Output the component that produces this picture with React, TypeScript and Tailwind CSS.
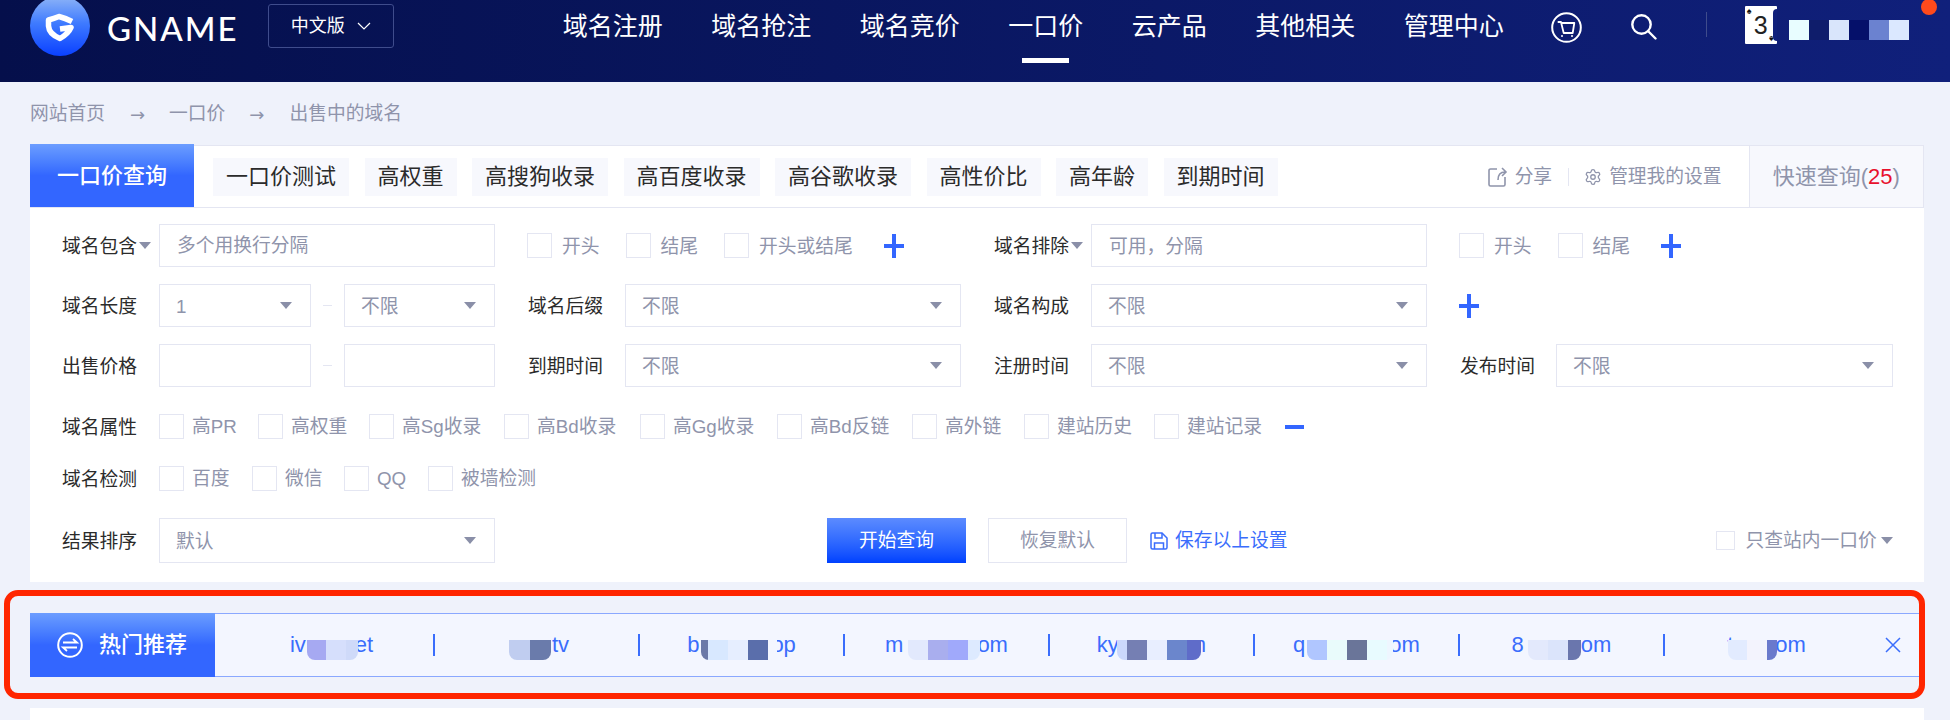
import React from 'react';
import { Settings } from 'lucide-react';

const navItems = ['域名注册', '域名抢注', '域名竞价', '一口价', '云产品', '其他相关', '管理中心'];
const quickTags = ['一口价测试', '高权重', '高搜狗收录', '高百度收录', '高谷歌收录', '高性价比', '高年龄', '到期时间'];

const attrItems = [
  { text: '高PR', w: 'w-[99px]' },
  { text: '高权重', w: 'w-[111px]' },
  { text: '高Sg收录', w: 'w-[135px]' },
  { text: '高Bd收录', w: 'w-[136px]' },
  { text: '高Gg收录', w: 'w-[137px]' },
  { text: '高Bd反链', w: 'w-[135px]' },
  { text: '高外链', w: 'w-[112px]' },
  { text: '建站历史', w: 'w-[130px]' },
  { text: '建站记录', w: 'w-[131px]' },
];

const checkItems = [
  { text: '百度', w: 'w-[93px]' },
  { text: '微信', w: 'w-[92px]' },
  { text: 'QQ', w: 'w-[84px]' },
  { text: '被墙检测', w: 'w-[120px]' },
];

// the domain names are blurred out in the picture, so each one is text + mosaic + text
const hotDomains = [
  { pre: 'iv', post: 'et', patch: 'ml-[1px] -mr-[3px]', cells: [['bg-[#a6a9f2]', 'w-[19px]'], ['bg-[#d6dffc]', 'w-[20px]'], ['bg-[#cfdaf9]', 'w-[12px]']] },
  { pre: '', post: 'tv', patch: 'ml-[5px] mr-[1px]', cells: [['bg-[#c0cdf0]', 'w-[21px]'], ['bg-[#6a7bab]', 'w-[21px]']] },
  { pre: 'b', post: 'op', patch: 'ml-[2px] -mr-[6px]', cells: [['bg-[#6b79a8]', 'w-[7px]'], ['bg-[#d8e8ff]', 'w-[20px]'], ['bg-[#e6eeff]', 'w-[20px]'], ['bg-[#5a6eab]', 'w-[20px]'], ['bg-[#f3f6ff]', 'w-[9px]']] },
  { pre: 'm', post: 'om', patch: 'ml-[5px] -mr-[3px]', cells: [['bg-[#e2e9fd]', 'w-[20px]'], ['bg-[#a9aeee]', 'w-[20px]'], ['bg-[#a0a9fb]', 'w-[20px]'], ['bg-[#ddeaff]', 'w-[12px]']] },
  { pre: 'ky', post: 'm', patch: '-ml-[2px] -mr-[13px]', cells: [['bg-[#cbd8fc]', 'w-[10px]'], ['bg-[#757fb3]', 'w-[20px]'], ['bg-[#e8eeff]', 'w-[20px]'], ['bg-[#6b86cc]', 'w-[20px]'], ['bg-[#5f6cc9]', 'w-[14px]']] },
  { pre: 'q', post: 'om', patch: 'ml-[2px] -mr-[4px]', cells: [['bg-[#b0c6ff]', 'w-[20px]'], ['bg-[#e9fbfb]', 'w-[20px]'], ['bg-[#6a7599]', 'w-[20px]'], ['bg-[#e8fbff]', 'w-[20px]'], ['bg-[#eef6ff]', 'w-[6px]']] },
  { pre: '8', post: 'om', patch: 'ml-[4px]', cells: [['bg-[#e3e9fc]', 'w-[20px]'], ['bg-[#dbe4fb]', 'w-[20px]'], ['bg-[#6a76ad]', 'w-[13px]']] },
  { pre: 't', post: 'om', patch: '-ml-[5px] -mr-[2px]', cells: [['bg-[#e2ebff]', 'w-[19px]'], ['bg-[#f3f3fd]', 'w-[20px]'], ['bg-[#6a79cc]', 'w-[10px]']] },
];

function Caret({ className = 'w-[12px] h-[7px]' }: { className?: string }) {
  return (
    <svg viewBox="0 0 12 7" className={className}>
      <path d="M0 0h12L6 7z" fill="#8a8fa8" />
    </svg>
  );
}

function Plus({ className = '' }: { className?: string }) {
  return (
    <svg viewBox="0 0 20 24" className={`w-[20px] h-[24px] ${className}`}>
      <path d="M8 0h4v10h8v4h-8v10H8V14H0v-4h8z" fill="#3366ff" />
    </svg>
  );
}

function Box() {
  return <span className="block w-[25px] h-[25px] shrink-0 border border-[#e4e6f2] bg-white" />;
}

function Check({ text }: { text: string }) {
  return (
    <span className="flex items-center gap-[10px] text-[#8f94ab]">
      <Box />
      <span className="pt-[3px]">{text}</span>
    </span>
  );
}

function Select({ value, className = 'w-[336px]' }: { value: string; className?: string }) {
  return (
    <div className={`flex h-full items-center justify-between border border-[#e4e6f2] pl-[16px] pr-[18px] text-[#8f94ab] ${className}`}>
      <span className="pt-[3px]">{value}</span>
      <Caret />
    </div>
  );
}

function Label({ children, caret = false }: { children: React.ReactNode; caret?: boolean }) {
  return (
    <span className="flex w-[97px] shrink-0 items-center gap-[2px] text-[#2b2b2b]">
      <span className="pt-[3px]">{children}</span>
      {caret && <Caret className="w-[12px] h-[7px]" />}
    </span>
  );
}

function Cell({ children, className = '' }: { children: React.ReactNode; className?: string }) {
  return <div className={`flex h-full w-[466px] shrink-0 items-center ${className}`}>{children}</div>;
}

function Logo() {
  return (
    <svg viewBox="0 0 60 60" className="w-[60px] h-[60px] -mt-[4px] shrink-0">
      <defs>
        <linearGradient id="logoBlue" x1="0" y1="0" x2="0" y2="1">
          <stop offset="0" stopColor="#8fb5f7" />
          <stop offset="0.45" stopColor="#3f7bff" />
          <stop offset="1" stopColor="#0a40ff" />
        </linearGradient>
      </defs>
      <circle cx="30" cy="30" r="30" fill="url(#logoBlue)" />
      <path
        d="M42 25.500Q35 22 29 20.500Q24 22.500 18.500 24V30Q19 38 30 42.500Q38.500 37.500 41 31.500L30 33"
        fill="none"
        stroke="#fff"
        strokeWidth="5.500"
        strokeLinejoin="round"
      />
    </svg>
  );
}

function PlayingCard() {
  return (
    <div className="relative mt-[6px] flex h-[38px] w-[32px] shrink-0 items-center justify-center overflow-hidden rounded-[1px] bg-white text-[25px] leading-none text-[#222]">
      3
      <span className="absolute left-[2px] top-[1px] text-[9px] text-[#111]">♠</span>
      <span className="absolute bottom-[1px] right-[3px] rotate-180 text-[9px] text-[#111]">♠</span>
      <span className="absolute -right-[4px] top-[3px] h-[32px] w-[8px] rounded-full bg-[#10207b]" />
    </div>
  );
}

export default function App() {
  return (
    <div className="relative h-[720px] w-[1950px] overflow-hidden bg-[#eff2fb] font-['Liberation_Sans','Noto_Sans_CJK_SC',sans-serif] text-[18.75px] leading-none">
      {/* top bar */}
      <header className="flex h-[82px] items-start overflow-hidden bg-linear-to-r from-[#050f4b] to-[#10207b] pl-[30px] text-white">
        <Logo />
        <span className="ml-[17px] mt-[12px] text-[33px] font-medium tracking-[2px] font-['Lato','Liberation_Sans',sans-serif]">GNAME</span>
        <div className="ml-[29px] mt-[4px] flex h-[44px] w-[126px] items-center justify-center gap-[12px] rounded-[3px] border border-[#3f4c8c] text-[18px]">
          中文版
          <svg viewBox="0 0 14 8" className="h-[8px] w-[14px]">
            <path d="M1 1l6 6 6-6" fill="none" stroke="#fff" strokeWidth="1.200" />
          </svg>
        </div>
        <nav className="ml-[169px] mt-[14px] flex gap-[48.5px] text-[25px]">
          {navItems.map((item) => (
            <a key={item} className="relative block">
              {item}
              {item === '一口价' && <span className="absolute -bottom-[24px] left-[14px] h-[5px] w-[47px] bg-white" />}
            </a>
          ))}
        </nav>
        <svg viewBox="0 0 31 31" className="ml-[47px] mt-[12px] h-[31px] w-[31px] shrink-0" fill="none" stroke="#fff">
          <circle cx="15.500" cy="15.500" r="14.300" strokeWidth="2" />
          <path d="M6.700 10H10l2.700 11h9l1.600-10H11" strokeWidth="1.800" strokeLinejoin="round" />
          <circle cx="11" cy="24" r="1" fill="#fff" stroke="none" />
          <circle cx="21" cy="24" r="1" fill="#fff" stroke="none" />
        </svg>
        <svg viewBox="0 0 26 26" className="ml-[49px] mt-[14px] h-[26px] w-[26px] shrink-0" fill="none" stroke="#fff" strokeWidth="2.400">
          <circle cx="10.500" cy="10.500" r="9.200" />
          <path d="M17 17l7.500 7.500" strokeLinecap="round" />
        </svg>
        <span className="ml-[49px] mt-[12px] h-[25px] w-px shrink-0 bg-[#3f4c8c]" />
        <div className="ml-[38px]">
          <PlayingCard />
        </div>
        <div className="ml-[12px] mt-[20px] flex h-[20px]">
          <span className="w-[20px] bg-[#e8fdff]" />
          <span className="w-[20px] bg-[#0f1d6b]" />
          <span className="w-[20px] bg-[#d9e5fb]" />
          <span className="w-[20px] bg-[#05106a]" />
          <span className="w-[20px] bg-[#6b82d0]" />
          <span className="w-[20px] bg-[#dbe8ff]" />
        </div>
        <span className="ml-[12px] -mt-[1px] h-[16px] w-[16px] shrink-0 rounded-full bg-[#ff4a1c]" />
      </header>

      <main className="pl-[30px] pr-[26px]">
        <div className="flex h-[63px] items-center pt-[2px] text-[#8f94ab]">
          网站首页
          <span className="ml-[25px] font-['DejaVu_Sans',sans-serif] text-[18px]">→</span>
          <span className="ml-[24px]">一口价</span>
          <span className="ml-[24px] font-['DejaVu_Sans',sans-serif] text-[18px]">→</span>
          <span className="ml-[25px]">出售中的域名</span>
        </div>

        {/* quick tabs */}
        <div className="flex h-[63px] items-center border-y border-[#e4e6f2] bg-white">
          <div className="-mt-[2px] flex h-[63px] w-[164px] shrink-0 items-center justify-center bg-linear-to-b from-[#6c9dff] to-[#3366ff] to-50% text-[22px] font-medium text-white">
            一口价查询
          </div>
          <div className="ml-[19px] flex gap-[15.500px] text-[22px] text-[#2b2b2b]">
            {quickTags.map((tag) => (
              <span key={tag} className="flex h-[38px] items-center bg-[#f7f8fd] px-[13px]">
                {tag}
              </span>
            ))}
          </div>
          <div className="ml-[210px] flex items-center text-[#8f94ab]">
            <svg viewBox="0 0 20 22" className="h-[22px] w-[20px]" fill="none" stroke="#8f94ab" strokeWidth="1.600">
              <path d="M9 3H2.500a1.500 1.500 0 0 0-1.500 1.500v14A1.500 1.500 0 0 0 2.500 20h13a1.500 1.500 0 0 0 1.500-1.500V11" />
              <path d="M10 14c0-5 2-8 7-8M14 2l4 4-4 4" />
            </svg>
            <span className="ml-[7px] pt-[2px]">分享</span>
            <span className="ml-[16px] h-[18px] w-px bg-[#e4e6f2]" />
            <Settings size={18} strokeWidth={1.700} className="ml-[15px]" />
            <span className="ml-[7px] pt-[2px]">管理我的设置</span>
          </div>
          <div className="ml-[27px] flex h-full flex-1 items-center justify-center border-x border-[#e4e6f2] bg-[#f7f8fd] text-[22px] text-[#8f94ab]">
            快速查询(<span className="text-[#e8112d]">25</span>)
          </div>
        </div>

        {/* search form */}
        <div className="bg-white pl-[32px] pt-[16px] pb-[19px]">
          <div className="flex h-[43px]">
            <Cell>
              <Label caret>域名包含</Label>
              <input
                placeholder="多个用换行分隔"
                className="h-full w-[336px] border border-[#e4e6f2] pl-[17px] outline-none placeholder:text-[#8f94ab]"
              />
            </Cell>
            <Cell className="-translate-x-px gap-[26px]">
              <Check text="开头" />
              <Check text="结尾" />
              <Check text="开头或结尾" />
              <Plus className="ml-[5px]" />
            </Cell>
            <Cell>
              <Label caret>域名排除</Label>
              <input
                placeholder="可用，分隔"
                className="h-full w-[336px] border border-[#e4e6f2] pl-[17px] pt-[2px] outline-none placeholder:text-[#8f94ab]"
              />
            </Cell>
            <Cell className="-translate-x-px gap-[26px]">
              <Check text="开头" />
              <Check text="结尾" />
              <Plus className="ml-[5px]" />
            </Cell>
          </div>

          <div className="mt-[17px] flex h-[43px]">
            <Cell>
              <Label>域名长度</Label>
              <Select value="1" className="w-[152px]" />
              <span className="mx-[12px] h-px w-[9px] bg-[#e4e6f2]" />
              <Select value="不限" className="w-[151px]" />
            </Cell>
            <Cell>
              <Label>域名后缀</Label>
              <Select value="不限" />
            </Cell>
            <Cell>
              <Label>域名构成</Label>
              <Select value="不限" />
            </Cell>
            <Cell className="-translate-x-px">
              <Plus />
            </Cell>
          </div>

          <div className="mt-[17px] flex h-[43px]">
            <Cell>
              <Label>出售价格</Label>
              <span className="h-full w-[152px] border border-[#e4e6f2]" />
              <span className="mx-[12px] h-px w-[9px] bg-[#e4e6f2]" />
              <span className="h-full w-[151px] border border-[#e4e6f2]" />
            </Cell>
            <Cell>
              <Label>到期时间</Label>
              <Select value="不限" />
            </Cell>
            <Cell>
              <Label>注册时间</Label>
              <Select value="不限" />
            </Cell>
            <Cell>
              <Label>发布时间</Label>
              <Select value="不限" className="-ml-px w-[337px]" />
            </Cell>
          </div>

          <div className="mt-[27px] flex h-[25px] items-center">
            <Label>域名属性</Label>
            {attrItems.map((item) => (
              <span key={item.text} className={`flex items-center gap-[8px] text-[#8f94ab] ${item.w}`}>
                <Box />
                <span className="pt-[2px]">{item.text}</span>
              </span>
            ))}
            <span className="h-[4px] w-[19px] bg-[#3366ff]" />
          </div>

          <div className="mt-[27px] flex h-[25px] items-center">
            <Label>域名检测</Label>
            {checkItems.map((item) => (
              <span key={item.text} className={`flex items-center gap-[8px] text-[#8f94ab] ${item.w}`}>
                <Box />
                <span className="pt-[2px]">{item.text}</span>
              </span>
            ))}
          </div>

          <div className="mt-[27px] flex h-[45px] items-center">
            <Label>结果排序</Label>
            <Select value="默认" />
            <button className="ml-[332px] flex h-full w-[139px] items-center justify-center bg-linear-to-b from-[#5c8bff] to-[#0040ff] pt-[2px] text-white">
              开始查询
            </button>
            <button className="ml-[22px] flex h-full w-[139px] items-center justify-center border border-[#e4e6f2] pt-[2px] text-[#8f94ab]">
              恢复默认
            </button>
            <svg viewBox="0 0 18 18" className="ml-[23px] h-[18px] w-[18px]" fill="none" stroke="#3a6dfc" strokeWidth="1.500">
              <path d="M1 2.500A1.500 1.500 0 0 1 2.500 1H12l5 5v9.500a1.500 1.500 0 0 1-1.500 1.500h-13A1.500 1.500 0 0 1 1 15.500z" />
              <path d="M5 1v5h7V1M4.500 17v-6h9v6" />
            </svg>
            <span className="ml-[7px] pt-[1px] text-[#3a6dfc]">保存以上设置</span>
            <span className="ml-[428px] h-[19px] w-[19px] border border-[#e4e6f2]" />
            <span className="ml-[11px] pt-[1px] text-[#8f94ab]">只查站内一口价</span>
            <Caret className="ml-[4px] h-[7px] w-[12px]" />
          </div>
        </div>

        {/* hot domains */}
        <div className="relative mt-[31px]">
          <div className="flex h-[64px] items-center border-y border-[#8aa8ff] bg-[#f3f6ff] text-[22px] text-[#3a6dfc]">
            <div className="flex h-[64px] w-[185px] shrink-0 items-center bg-linear-to-b from-[#6c9dff] to-[#3366ff] to-50% pl-[27px] font-medium text-white">
              <svg viewBox="0 0 26 26" className="h-[26px] w-[26px]" fill="none" stroke="#fff" strokeWidth="2">
                <circle cx="13" cy="13" r="11.800" />
                <path d="M6 10.500h14l-4-3.500M20 15.500H6l4 3.500" strokeWidth="1.800" />
              </svg>
              <span className="ml-[16px]">热门推荐</span>
            </div>
            <div className="ml-[15px] flex">
              {hotDomains.map((d, i) => (
                <div key={i} className="flex items-center">
                  <div className="flex w-[203px] items-center justify-center">
                    <span className="relative z-0">{d.pre}</span>
                    <span className={`relative z-10 translate-y-[5px] ${d.patch}`}>
                      <span className="flex h-[20px] overflow-hidden rounded-b-[8px]">
                        {d.cells.map(([bg, w], j) => (
                          <span key={j} className={`${bg} ${w}`} />
                        ))}
                      </span>
                    </span>
                    <span className="relative z-0">{d.post}</span>
                  </div>
                  {i < hotDomains.length - 1 && <span className="h-[22px] w-[2px] bg-[#3a6dfc]" />}
                </div>
              ))}
            </div>
            <svg viewBox="0 0 16 16" className="ml-[17px] h-[16px] w-[16px]" fill="none" stroke="#3a6dfc" strokeWidth="1.500">
              <path d="M1 1l14 14M15 1L1 15" />
            </svg>
          </div>
          {/* red annotation frame drawn on the screenshot */}
          <div className="pointer-events-none absolute -bottom-[22px] -left-[26px] -right-[1px] -top-[23px] rounded-[14px] border-[6px] border-[#ff2600]" />
        </div>

        <div className="mt-[31px] h-[20px] bg-white" />
      </main>
    </div>
  );
}
